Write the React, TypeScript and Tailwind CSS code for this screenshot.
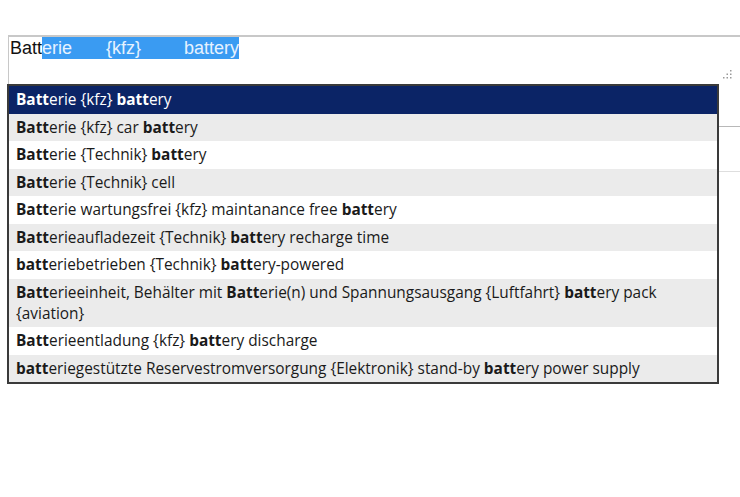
const rows: { parts: [string, boolean][]; active?: boolean }[] = [
  { parts: [["Batt", true], ["erie {kfz} ", false], ["batt", true], ["ery", false]], active: true },
  { parts: [["Batt", true], ["erie {kfz} car ", false], ["batt", true], ["ery", false]] },
  { parts: [["Batt", true], ["erie {Technik} ", false], ["batt", true], ["ery", false]] },
  { parts: [["Batt", true], ["erie {Technik} cell", false]] },
  { parts: [["Batt", true], ["erie wartungsfrei {kfz} maintanance free ", false], ["batt", true], ["ery", false]] },
  { parts: [["Batt", true], ["erieaufladezeit {Technik} ", false], ["batt", true], ["ery recharge time", false]] },
  { parts: [["batt", true], ["eriebetrieben {Technik} ", false], ["batt", true], ["ery-powered", false]] },
  {
    parts: [
      ["Batt", true],
      ["erieeinheit, Behälter mit ", false],
      ["Batt", true],
      ["erie(n) und Spannungsausgang {Luftfahrt} ", false],
      ["batt", true],
      ["ery pack ", false],
      ["{aviation}", false],
    ],
  },
  { parts: [["Batt", true], ["erieentladung {kfz} ", false], ["batt", true], ["ery discharge", false]] },
  {
    parts: [
      ["batt", true],
      ["eriegestützte Reservestromversorgung {Elektronik} stand-by ", false],
      ["batt", true],
      ["ery power supply", false],
    ],
  },
];

export default function App() {
  return (
    <div className="h-[497px] w-[740px] overflow-hidden bg-white pt-[35px]">
      {/* input field */}
      <div className="relative ml-2 h-[49px] border-l border-t-2 border-[#c8c8c8] bg-white">
        <div
          className="flex h-[22px] items-center pl-[1px] text-[18px] text-[#111]"
          style={{ fontFamily: '"Liberation Sans", Arial, sans-serif' }}
        >
          <span>Batt</span>
          <span className="flex h-[22px] items-center bg-[#3a9bf2] text-[#e6f2ff]">
            <span>erie</span>
            <span className="ml-[34px]">{"{kfz}"}</span>
            <span className="ml-[43px]">battery</span>
          </span>
        </div>
        <svg className="absolute right-[8px] top-[32px]" width="10" height="11" viewBox="0 0 10 11">
          {[
            [8, 1],
            [8, 4.5],
            [4.5, 4.5],
            [8, 8],
            [4.5, 8],
            [1, 8],
          ].map(([x, y], i) => (
            <rect key={i} x={x} y={y} width="1.5" height="1.5" fill="#9a9a9a" />
          ))}
        </svg>
      </div>

      <div className="flex">
        {/* suggestion list */}
        <div
          className="ml-[7px] w-[712px] border-2 border-[#3a3a3a] text-[15.4px] text-[#1a1a1a]"
          style={{ fontFamily: '"Open Sans", "Noto Sans", sans-serif' }}
        >
          {rows.map((row, i) => (
            <div
              key={i}
              className={
                row.active
                  ? "bg-[#0b2466] px-[7px] py-[3.25px] leading-[21px] text-white"
                  : i % 2 === 1
                    ? "bg-[#ebebeb] px-[7px] py-[3.25px] leading-[21px]"
                    : "bg-white px-[7px] py-[3.25px] leading-[21px]"
              }
            >
              {row.parts.map(([t, b], j) =>
                b ? (
                  <b key={j} className="font-bold">
                    {t}
                  </b>
                ) : (
                  <span key={j}>{t}</span>
                )
              )}
            </div>
          ))}
        </div>
        <div className="flex-1">
          <div className="mt-[42px] border-t border-[#b8b8b8]" />
          <div className="mt-[44px] border-t border-[#dedede]" />
        </div>
      </div>
    </div>
  );
}
